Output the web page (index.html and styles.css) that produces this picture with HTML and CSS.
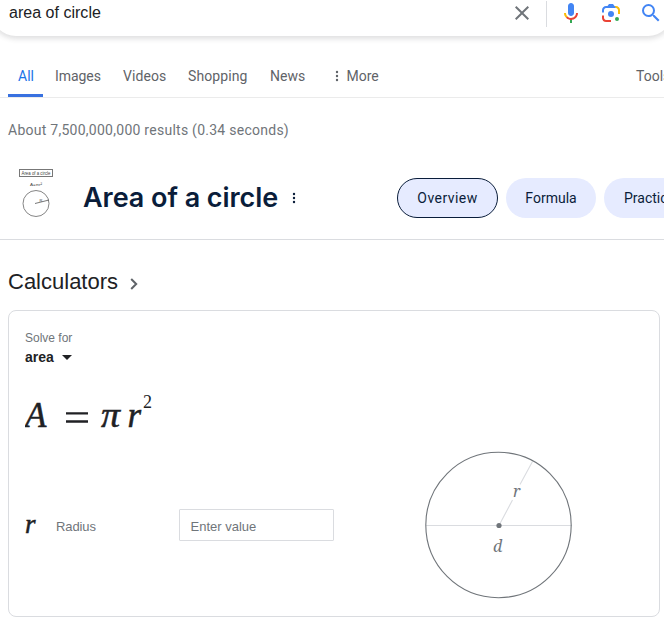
FILE: index.html
```html
<!DOCTYPE html>
<html lang="en">
<head>
<meta charset="utf-8">
<title>area of circle</title>
<link rel="stylesheet" href="styles.css">
</head>
<body>
<header class="search">
  <span class="query">area of circle</span>
  <svg class="icon clear" viewBox="0 0 24 24"><path fill="#70757a" d="M19 6.41L17.59 5 12 10.59 6.41 5 5 6.41 10.59 12 5 17.59 6.41 19 12 13.41 17.59 19 19 17.59 13.41 12z"/></svg>
  <span class="divider"></span>
  <svg class="icon mic" viewBox="0 0 24 24"><path fill="#4285f4" d="M12 15c1.66 0 3-1.31 3-2.97V5.01C15 3.35 13.66 2 12 2S9 3.34 9 5.01v7.02C9 13.69 10.34 15 12 15z"/><path fill="#34a853" d="M11 18.08h2V22h-2z"/><path fill="#fbbc05" d="M7.05 16.87C5.78 15.54 5 14.04 5 12h2c0 1.45.56 2.42 1.47 3.38v.32l-1.15 1.18z"/><path fill="#ea4335" d="M12 16.93a4.97 5.25 0 0 1-3.54-1.55l-1.41 1.49C8.31 18.21 10.07 19 12 19c3.87 0 6.99-2.92 6.99-7H17c0 2.92-2.24 4.93-5 4.93z"/></svg>
  <svg class="icon lens" viewBox="0 0 192 192"><circle fill="#34a853" cx="144" cy="144" r="16"/><circle fill="#4285f4" cx="96" cy="104" r="24"/><path fill="#ea4335" d="M24 135.2C24 153.3 38.7 168 56.8 168H96v-16l-40.1-.1c-8.8 0-15.9-8.2-15.9-17.9v-18H24z"/><path fill="#fbbc04" d="M168 72.8c0-18.1-14.7-32.8-32.8-32.8H116l20 16c8.800 0 16 8.300 16 18v30h16z"/><path fill="#4285f4" d="M112 24H80L68 40H56.8C38.7 40 24 54.7 24 72.8V92h16V74c0-9.7 7.2-18 16-18h80z"/></svg>
  <svg class="icon glass" viewBox="0 0 24 24"><path fill="#4285f4" d="M15.5 14h-.79l-.28-.27A6.47 6.47 0 0 0 16 9.5 6.5 6.5 0 1 0 9.5 16c1.61 0 3.09-.59 4.23-1.57l.27.28v.79l5 4.99L20.49 19zm-6 0A4.5 4.5 0 1 1 14 9.5 4.5 4.5 0 0 1 9.5 14z"/></svg>
</header>

<nav class="tabs">
  <a class="tab active"><span class="t-all">All</span></a>
  <a class="tab"><span class="t-images">Images</span></a>
  <a class="tab"><span class="t-videos">Videos</span></a>
  <a class="tab"><span class="t-shopping">Shopping</span></a>
  <a class="tab"><span class="t-news">News</span></a>
  <a class="tab more"><svg class="dots" viewBox="0 0 4 12"><circle cx="2" cy="2" r="1.2"/><circle cx="2" cy="6" r="1.2"/><circle cx="2" cy="10" r="1.2"/></svg><span class="t-more">More</span></a>
  <a class="tools">Tools</a>
</nav>

<p class="stats"><span>About 7,500,000,000 results (0.34 seconds)</span></p>

<section class="topic">
  <svg class="thumb" viewBox="0 0 36 52">
    <rect x="1.5" y="3.5" width="33" height="7" fill="none" stroke="#777"/>
    <text x="3.5" y="8.7" textLength="29" lengthAdjust="spacingAndGlyphs">Area of a circle</text>
    <text class="tiny" x="12" y="19.5" textLength="12" lengthAdjust="spacingAndGlyphs">A=πr²</text>
    <circle cx="18" cy="37.5" r="13" fill="none" stroke="#666" stroke-width=".8"/>
    <path d="M17 37.5L31 34" stroke="#555" stroke-width=".8"/>
    <text class="tiny" x="21.5" y="35.5">R</text>
  </svg>
  <h1><span>Area of a circle</span></h1>
  <svg class="dots dark" viewBox="0 0 4 12"><circle cx="2" cy="2" r="1.2"/><circle cx="2" cy="6" r="1.2"/><circle cx="2" cy="10" r="1.2"/></svg>
  <div class="chips">
    <a class="chip selected"><span>Overview</span></a>
    <a class="chip formula"><span>Formula</span></a>
    <a class="chip practice"><span>Practice</span></a>
  </div>
</section>

<h2 class="heading"><span>Calculators</span><svg class="chevron" viewBox="0 0 8 12"><path d="M1.2 1l5 5-5 5" fill="none" stroke="#5f6368" stroke-width="2"/></svg></h2>

<main class="card">
  <div class="label"><span>Solve for</span></div>
  <div class="select"><span>area</span><svg class="arrow" viewBox="0 0 10 5"><path d="M0 0h10L5 5z" fill="#202124"/></svg></div>
  <svg class="equation" viewBox="0 0 140 50">
    <text class="it" x="0" y="37" font-size="35">A</text>
    <path d="M41 23.300h22M41 31.500h22" stroke="#202124" stroke-width="2.3"/>
    <text class="it" x="76" y="37" font-size="35" textLength="19" lengthAdjust="spacingAndGlyphs">π</text>
    <text class="it" x="102.500" y="37" font-size="35">r</text>
    <text class="up" x="118" y="17.500" font-size="18">2</text>
  </svg>
  <div class="body">
    <div class="field">
      <i class="var">r</i>
      <span class="name"><span>Radius</span></span>
      <span class="input"><span>Enter value</span></span>
    </div>
    <svg class="diagram" viewBox="0 0 148 148">
      <path d="M1 74.500h146M74 74.500L87.500 49M95 33.500L107.500 10.500" fill="none" stroke="#dadce0" stroke-width="1.1"/>
      <circle cx="73.500" cy="74" r="72.700" fill="none" stroke="#70757a" stroke-width="1.1"/>
      <circle cx="74" cy="74.500" r="2.600" fill="#70757a"/>
      <text x="88" y="46">r</text>
      <text x="68" y="100.500">d</text>
    </svg>
  </div>
</main>
</body>
</html>
```
FILE: styles.css
```css
* { box-sizing: border-box; }
body {
  margin: 0;
  width: 664px;
  height: 622px;
  overflow: hidden;
  background: #fff;
  color: #202124;
  font-family: "Liberation Sans", Arial, sans-serif;
}
span { white-space: nowrap; }

.search {
  display: flex;
  align-items: flex-start;
  width: 680px;
  height: 60px;
  margin: -24px 0 0 -8px;
  padding: 25px 0 0 17px;
  border-radius: 24px;
  box-shadow: 0 2px 5px 1px rgba(64, 60, 67, .16);
}
.query { width: 501px; font-size: 16px; line-height: 24px; letter-spacing: .02px; }
.icon { flex: none; width: 24px; height: 24px; }
.clear { margin-right: 12px; }
.divider { width: 1px; height: 26px; margin-right: 12px; background: #dadce0; }
.mic { margin-right: 16px; }
.lens { margin-right: 16px; }

.tabs {
  display: flex;
  height: 62px;
  padding-left: 8px;
  border-bottom: 1px solid #ebebeb;
  color: #5f6368;
  font: 14px/20px Roboto, sans-serif;
  overflow: hidden;
}
.tab { display: flex; align-items: flex-start; height: 61px; padding: 30px 10px 0; margin-right: 2px; }
.active { width: 35px; color: #1a73e8; border-bottom: 3px solid #3871e0; }
.tab .t-images { width: 46px; letter-spacing: -.05px; }
.tab .t-videos { width: 43px; letter-spacing: .1px; }
.tab .t-shopping { width: 60px; letter-spacing: .1px; }
.tab .t-news { width: 35px; }
.more { margin-left: 8px; }
.dots { width: 4px; height: 12px; fill: #5f6368; }
.more .dots { margin: 4px 8px 0 0; }
.tab.more { padding-left: 9.500px; }
.tools { margin-left: auto; width: 28px; padding-top: 30px; }

.stats { margin: 0; padding: 22px 8px 0; height: 68px; color: #70757a; font: 14px/20px Roboto, sans-serif; letter-spacing: .26px; }

.topic { display: flex; align-items: center; height: 74px; padding: 0 0 10px 18px; border-bottom: 1px solid #dadce0; overflow: hidden; }
.thumb { flex: none; width: 36px; height: 52px; margin: -12px 29px 0 0; font: 5px "Liberation Sans", sans-serif; fill: #444; }
.thumb .tiny { font-size: 4px; }
h1 { flex: none; width: 195px; margin: 0; color: #0a1d3a; font: 600 27px/36px Inter, sans-serif; letter-spacing: -.05px; }
.dark { flex: none; margin-left: 14px; fill: #0a1d3a; }
.chips { display: flex; flex: none; gap: 8px; margin-left: 101px; }
.chip { display: flex; justify-content: center; align-items: center; width: 90px; height: 40px; border-radius: 20px; background: #e6ebff; color: #0a1d3a; font: 14px/20px Roboto, sans-serif; }
.selected { width: 101px; border: 1px solid #0a1d3a; letter-spacing: .45px; }
.practice { justify-content: flex-start; padding-left: 20px; }

.heading { display: flex; align-items: center; height: 70px; margin: 0; padding: 14px 8px 0; font-size: 22px; font-weight: 400; }
.chevron { width: 8px; height: 12px; margin: 4px 0 0 12px; }

.card { width: 652px; height: 307px; margin-left: 8px; padding: 19px 16px 0; border: 1px solid #dadce0; border-radius: 8px; }
.label { color: #70757a; font-size: 12px; line-height: 16px; }
.select { display: flex; align-items: center; height: 22px; font-size: 14px; font-weight: 700; }
.arrow { width: 10px; height: 5px; margin-left: 8px; }
.equation { display: block; width: 140px; height: 50px; margin-top: 22px; fill: #202124; font-family: "Liberation Serif", serif; }
.equation .it { font-style: italic; stroke: #202124; stroke-width: .5px; }
.body { display: flex; margin-top: 11px; }
.field { display: flex; align-items: center; height: 32px; margin-top: 58px; color: #70757a; font-size: 13px; }
.var { width: 31px; margin-top: -2px; color: #202124; font: italic 27px/28px "Liberation Serif", serif; -webkit-text-stroke: .5px #202124; }
.name { width: 123px; padding-top: 3px; letter-spacing: -.1px; }
.input { display: flex; align-items: center; width: 155px; height: 32px; padding: 3px 11px 0 10.500px; border: 1px solid #dadce0; border-radius: 1px; }
.diagram { width: 148px; height: 148px; margin-left: 91px; fill: #70757a; font: italic 16px "Noto Serif", "DejaVu Serif", "Liberation Serif", serif; }
```
